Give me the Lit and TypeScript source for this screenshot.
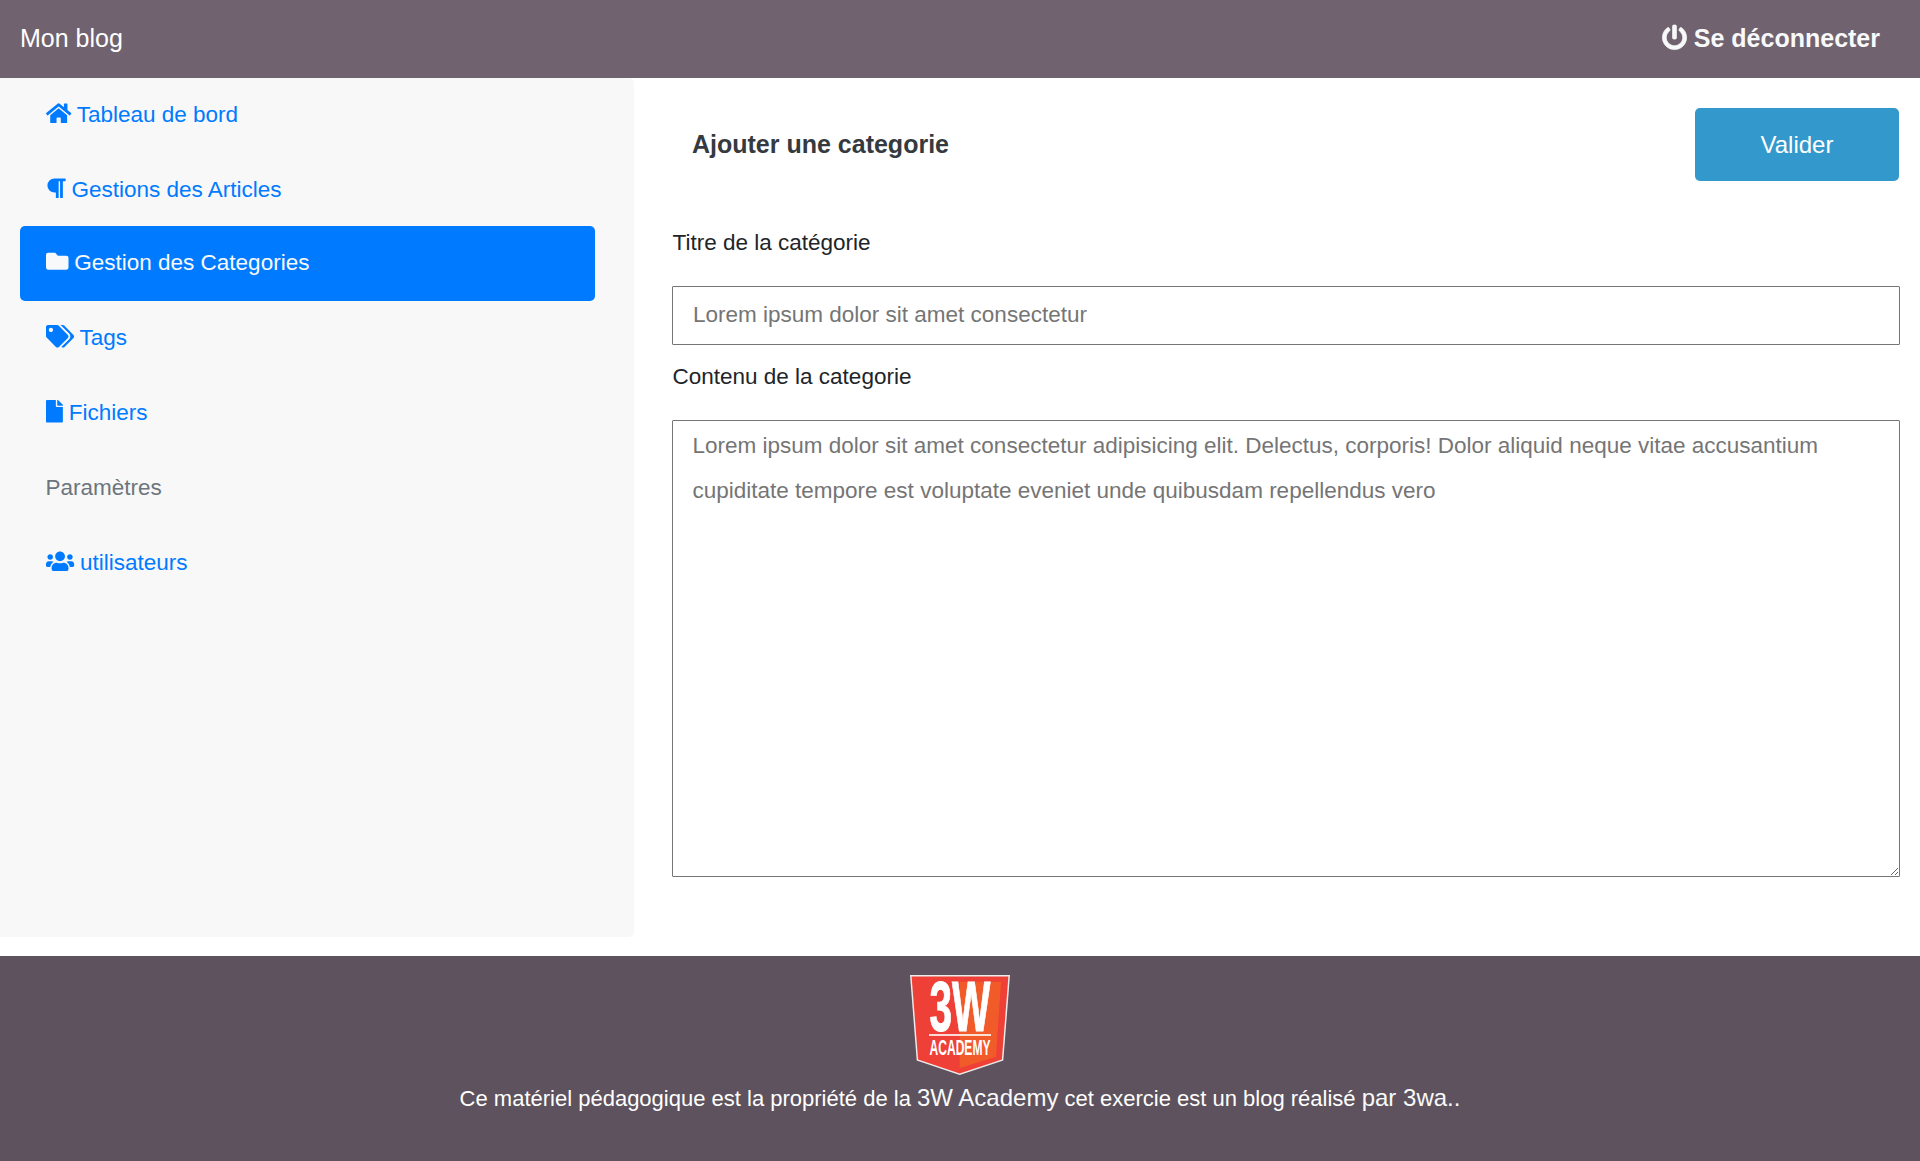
import { LitElement, html, css, svg, nothing } from "lit";
import { customElement } from "lit/decorators.js";
import { classMap } from "lit/directives/class-map.js";

interface Icon {
  width: number;
  path: string;
}

const icons: Record<string, Icon> = {
  home: {
    width: 576,
    path: "M280.37 148.26L96 300.11V464a16 16 0 0 0 16 16l112.06-.29a16 16 0 0 0 15.92-16V368a16 16 0 0 1 16-16h64a16 16 0 0 1 16 16v95.64a16 16 0 0 0 16 16.05L464 480a16 16 0 0 0 16-16V300L295.67 148.26a12.19 12.19 0 0 0-15.3 0zM571.6 251.47L488 182.56V44.05a12 12 0 0 0-12-12h-56a12 12 0 0 0-12 12v72.61L318.47 43a48 48 0 0 0-61 0L4.34 251.47a12 12 0 0 0-1.6 16.9l25.5 31A12 12 0 0 0 45.15 301l235.22-193.74a12.19 12.19 0 0 1 15.3 0L530.9 301a12 12 0 0 0 16.9-1.6l25.5-31a12 12 0 0 0-1.7-16.93z",
  },
  paragraph: {
    width: 448,
    path: "M448 48v32a16 16 0 0 1-16 16h-48v368a16 16 0 0 1-16 16h-32a16 16 0 0 1-16-16V96h-32v368a16 16 0 0 1-16 16h-32a16 16 0 0 1-16-16V352h-32a160 160 0 0 1 0-320h240a16 16 0 0 1 16 16z",
  },
  folder: {
    width: 512,
    path: "M464 128H272l-64-64H48C21.49 64 0 85.49 0 112v288c0 26.51 21.49 48 48 48h416c26.51 0 48-21.49 48-48V176c0-26.51-21.49-48-48-48z",
  },
  tags: {
    width: 640,
    path: "M497.941 225.941L286.059 14.059A48 48 0 0 0 252.118 0H48C21.49 0 0 21.49 0 48v204.118a48 48 0 0 0 14.059 33.941l211.882 211.882c18.744 18.745 49.136 18.746 67.882 0l204.118-204.118c18.745-18.745 18.745-49.137 0-67.882zM112 160c-26.51 0-48-21.49-48-48s21.49-48 48-48 48 21.49 48 48-21.49 48-48 48zm513.941 133.823L421.823 497.941c-18.745 18.745-49.137 18.745-67.882 0l-.36-.36L527.64 323.522c16.999-16.999 26.36-39.6 26.36-63.64s-9.362-46.641-26.36-63.64L331.397 0h48.721a48 48 0 0 1 33.941 14.059l211.882 211.882c18.745 18.745 18.745 49.137 0 67.882z",
  },
  file: {
    width: 384,
    path: "M224 136V0H24C10.7 0 0 10.7 0 24v464c0 13.3 10.7 24 24 24h336c13.3 0 24-10.7 24-24V160H248c-13.2 0-24-10.8-24-24zm160-14.1v6.1H256V0h6.1c6.4 0 12.5 2.5 17 7l97.9 98c4.5 4.5 7 10.6 7 16.9z",
  },
  users: {
    width: 640,
    path: "M96 224c35.3 0 64-28.7 64-64s-28.7-64-64-64-64 28.7-64 64 28.7 64 64 64zm448 0c35.3 0 64-28.7 64-64s-28.7-64-64-64-64 28.7-64 64 28.7 64 64 64zm32 32h-64c-17.6 0-33.5 7.1-45.1 18.6 40.3 22.1 68.9 62 75.1 109.4h66c17.7 0 32-14.3 32-32v-32c0-35.3-28.7-64-64-64zm-256 0c61.9 0 112-50.1 112-112S381.9 32 320 32 208 82.1 208 144s50.1 112 112 112zm76.8 32h-8.3c-20.8 10-43.9 16-68.5 16s-47.6-6-68.5-16h-8.3C179.6 288 128 339.6 128 403.2V432c0 26.5 21.5 48 48 48h288c26.5 0 48-21.5 48-48v-28.8c0-63.6-51.6-115.2-115.2-115.2zm-223.7-13.4C161.5 263.1 145.6 256 128 256H64c-35.3 0-64 28.7-64 64v32c0 17.7 14.3 32 32 32h65.9c6.3-47.4 34.9-87.3 75.2-109.4z",
  },
  power: {
    width: 512,
    path: "M400 54.1c63 45 104 118.6 104 201.9 0 136.8-110.8 247.7-247.5 248C120 504.300 8.200 393 8 256.400 7.900 173.100 48.900 99.300 111.800 54.200c11.700-8.300 28-4.800 35 7.700L162.600 90c5.900 10.500 3.100 23.800-6.600 31-41.500 30.800-68 79.600-68 134.900-.1 92.300 74.500 168.100 168 168.100 91.600 0 168.600-74.200 168-169.100-.3-51.800-24.700-101.800-68.100-134-9.700-7.200-12.400-20.500-6.500-30.900l15.800-28.100c7-12.400 23.200-16.100 34.800-7.800zM296 264V24c0-13.300-10.700-24-24-24h-32c-13.300 0-24 10.700-24 24v240c0 13.300 10.700 24 24 24h32c13.300 0 24-10.700 24-24z",
  },
};

const iconStyles = css`
  .icon {
    height: 1em;
    vertical-align: -0.125em;
    fill: currentColor;
    overflow: visible;
  }
`;

const renderIcon = (name: string) => {
  const icon = icons[name];
  return html`<svg class="icon" viewBox="0 0 ${icon.width} 512" aria-hidden="true">
    ${svg`<path d=${icon.path}></path>`}
  </svg>`;
};

interface NavItem {
  label: string;
  icon?: string;
  active?: boolean;
  disabled?: boolean;
}

@customElement("blog-header")
export class BlogHeader extends LitElement {
  static styles = [
    iconStyles,
    css`
      :host {
        display: flex;
        justify-content: space-between;
        align-items: center;
        box-sizing: border-box;
        height: 78px;
        padding: 0 40px 2px 20px;
        background: #70636f;
        color: #fff;
        font-size: 25px;
      }
      .logout {
        color: #f8f9fa;
        font-weight: bold;
      }
      .logout .icon {
        stroke: currentColor;
        stroke-width: 14px;
      }
    `,
  ];
  render() {
    return html`<span>Mon blog</span><span class="logout">${renderIcon("power")} Se déconnecter</span>`;
  }
}

@customElement("blog-nav")
export class BlogNav extends LitElement {
  static styles = [
    iconStyles,
    css`
      :host {
        display: block;
        box-sizing: border-box;
        width: 634px;
        height: 859px;
        padding: 0 39px 0 20px;
        background: #f8f8f8;
        border-radius: 0 5px 5px 0;
      }
      .link {
        box-sizing: border-box;
        height: 75px;
        padding: 14px 25px 16px 25.5px;
        line-height: 45px;
        border-radius: 5px;
        color: #007bff;
      }
      .lead {
        margin-bottom: -2px;
      }
      .active {
        background: #007bff;
        color: #f8f9fa;
      }
      .disabled {
        color: #6c757d;
      }
    `,
  ];
  private items: NavItem[] = [
    { label: "Tableau de bord", icon: "home" },
    { label: "Gestions des Articles", icon: "paragraph" },
    { label: "Gestion des Categories", icon: "folder", active: true },
    { label: "Tags", icon: "tags" },
    { label: "Fichiers", icon: "file" },
    { label: "Paramètres", disabled: true },
    { label: "utilisateurs", icon: "users" },
  ];
  render() {
    return this.items.map(
      (item, i) => html`<div
        class=${classMap({
          link: true,
          active: !!item.active,
          disabled: !!item.disabled,
          lead: !!this.items[i + 1]?.active,
        })}
      >${item.icon ? html`${renderIcon(item.icon)} ` : nothing}${item.label}</div>`
    );
  }
}

@customElement("category-form")
export class CategoryForm extends LitElement {
  static styles = css`
    :host {
      display: block;
      padding: 30px 20px 0 38px;
      color: #212529;
    }
    .head {
      display: flex;
      justify-content: space-between;
      align-items: center;
      height: 73px;
      padding-left: 20px;
      margin-bottom: 39px;
    }
    .title {
      margin: 0;
      font-size: 25px;
      font-weight: bold;
      color: #343a40;
    }
    .submit {
      width: 204px;
      height: 73px;
      margin-right: 1px;
      padding: 0;
      border: 0;
      border-radius: 5px;
      background: #3398cc;
      color: #fff;
      font: inherit;
      font-size: 24px;
    }
    .label {
      display: block;
      height: 66px;
      padding-left: 0.5px;
      line-height: 45px;
    }
    .field {
      display: block;
      box-sizing: border-box;
      width: 100%;
      margin: 0;
      border: 1px solid #767676;
      border-radius: 1px;
      background: #fff;
      font: inherit;
      color: #212529;
    }
    .field::placeholder {
      color: #757575;
    }
    .line {
      height: 59px;
      padding: 0 20px 1px;
      margin-bottom: 9px;
    }
    .area {
      height: 457px;
      padding: 2px 19.5px;
      line-height: 45px;
    }
  `;
  render() {
    return html`
      <div class="head">
        <h1 class="title">Ajouter une categorie</h1>
        <button class="submit">Valider</button>
      </div>
      <label class="label" for="titre">Titre de la catégorie</label>
      <input class="field line" id="titre" placeholder="Lorem ipsum dolor sit amet consectetur" />
      <label class="label" for="contenu">Contenu de la categorie</label>
      <textarea
        class="field area"
        id="contenu"
        placeholder="Lorem ipsum dolor sit amet consectetur adipisicing elit. Delectus, corporis! Dolor aliquid neque vitae accusantium cupiditate tempore est voluptate eveniet unde quibusdam repellendus vero"
      ></textarea>
    `;
  }
}

@customElement("blog-footer")
export class BlogFooter extends LitElement {
  static styles = css`
    :host {
      display: flex;
      flex-direction: column;
      align-items: center;
      box-sizing: border-box;
      height: 205px;
      padding-top: 19px;
      background: #5d525d;
      color: #fff;
      font-size: 22px;
    }
    .logo {
      width: 100px;
      height: 100px;
      overflow: visible;
    }
    .logo-text {
      font-family: "Liberation Sans Narrow", "Liberation Sans", Arial, sans-serif;
      font-weight: bold;
      fill: #fff;
    }
    .heavy {
      stroke: #fff;
      stroke-width: 1px;
    }
    .credit {
      margin: 1px 0 0;
      line-height: 44px;
    }
    .big {
      font-size: 24px;
      color: #f8f9fa;
    }
  `;
  render() {
    return html`
      <svg class="logo" viewBox="0 0 100 100" role="img" aria-label="3W Academy">
        <path d="M0 0H100L93.3 85.5L49.7 100L6.7 85.5Z" fill="#ececec" />
        <path d="M1.6 1.4H98.4L91.9 84.5L49.7 98.5L8.1 84.5Z" fill="#ee4036" />
        <path d="M49.7 6.7H91L86 82L49.7 93Z" fill="#f15a29" />
        <text class="logo-text heavy" x="19.5" y="55.6" font-size="70" textLength="61" lengthAdjust="spacingAndGlyphs">3W</text>
        <rect x="19" y="59.2" width="62" height="1.6" fill="#fff" />
        <text class="logo-text" x="19.5" y="80.3" font-size="22" textLength="61" lengthAdjust="spacingAndGlyphs">ACADEMY</text>
      </svg>
      <p class="credit">Ce matériel pédagogique est la propriété de la <span class="big">3W Academy</span> cet exercie est un blog réalisé <span class="big">par 3wa..</span></p>
    `;
  }
}

@customElement("app-root")
export class AppRoot extends LitElement {
  static styles = css`
    :host {
      display: block;
      height: 1161px;
      overflow: hidden;
      background: #fff;
      font: 22.5px "Liberation Sans", Arial, sans-serif;
    }
    .body {
      display: grid;
      grid-template-columns: 634px 1fr;
      height: 878px;
    }
  `;
  render() {
    return html`
      <blog-header></blog-header>
      <main class="body">
        <blog-nav></blog-nav>
        <category-form></category-form>
      </main>
      <blog-footer></blog-footer>
    `;
  }
}
